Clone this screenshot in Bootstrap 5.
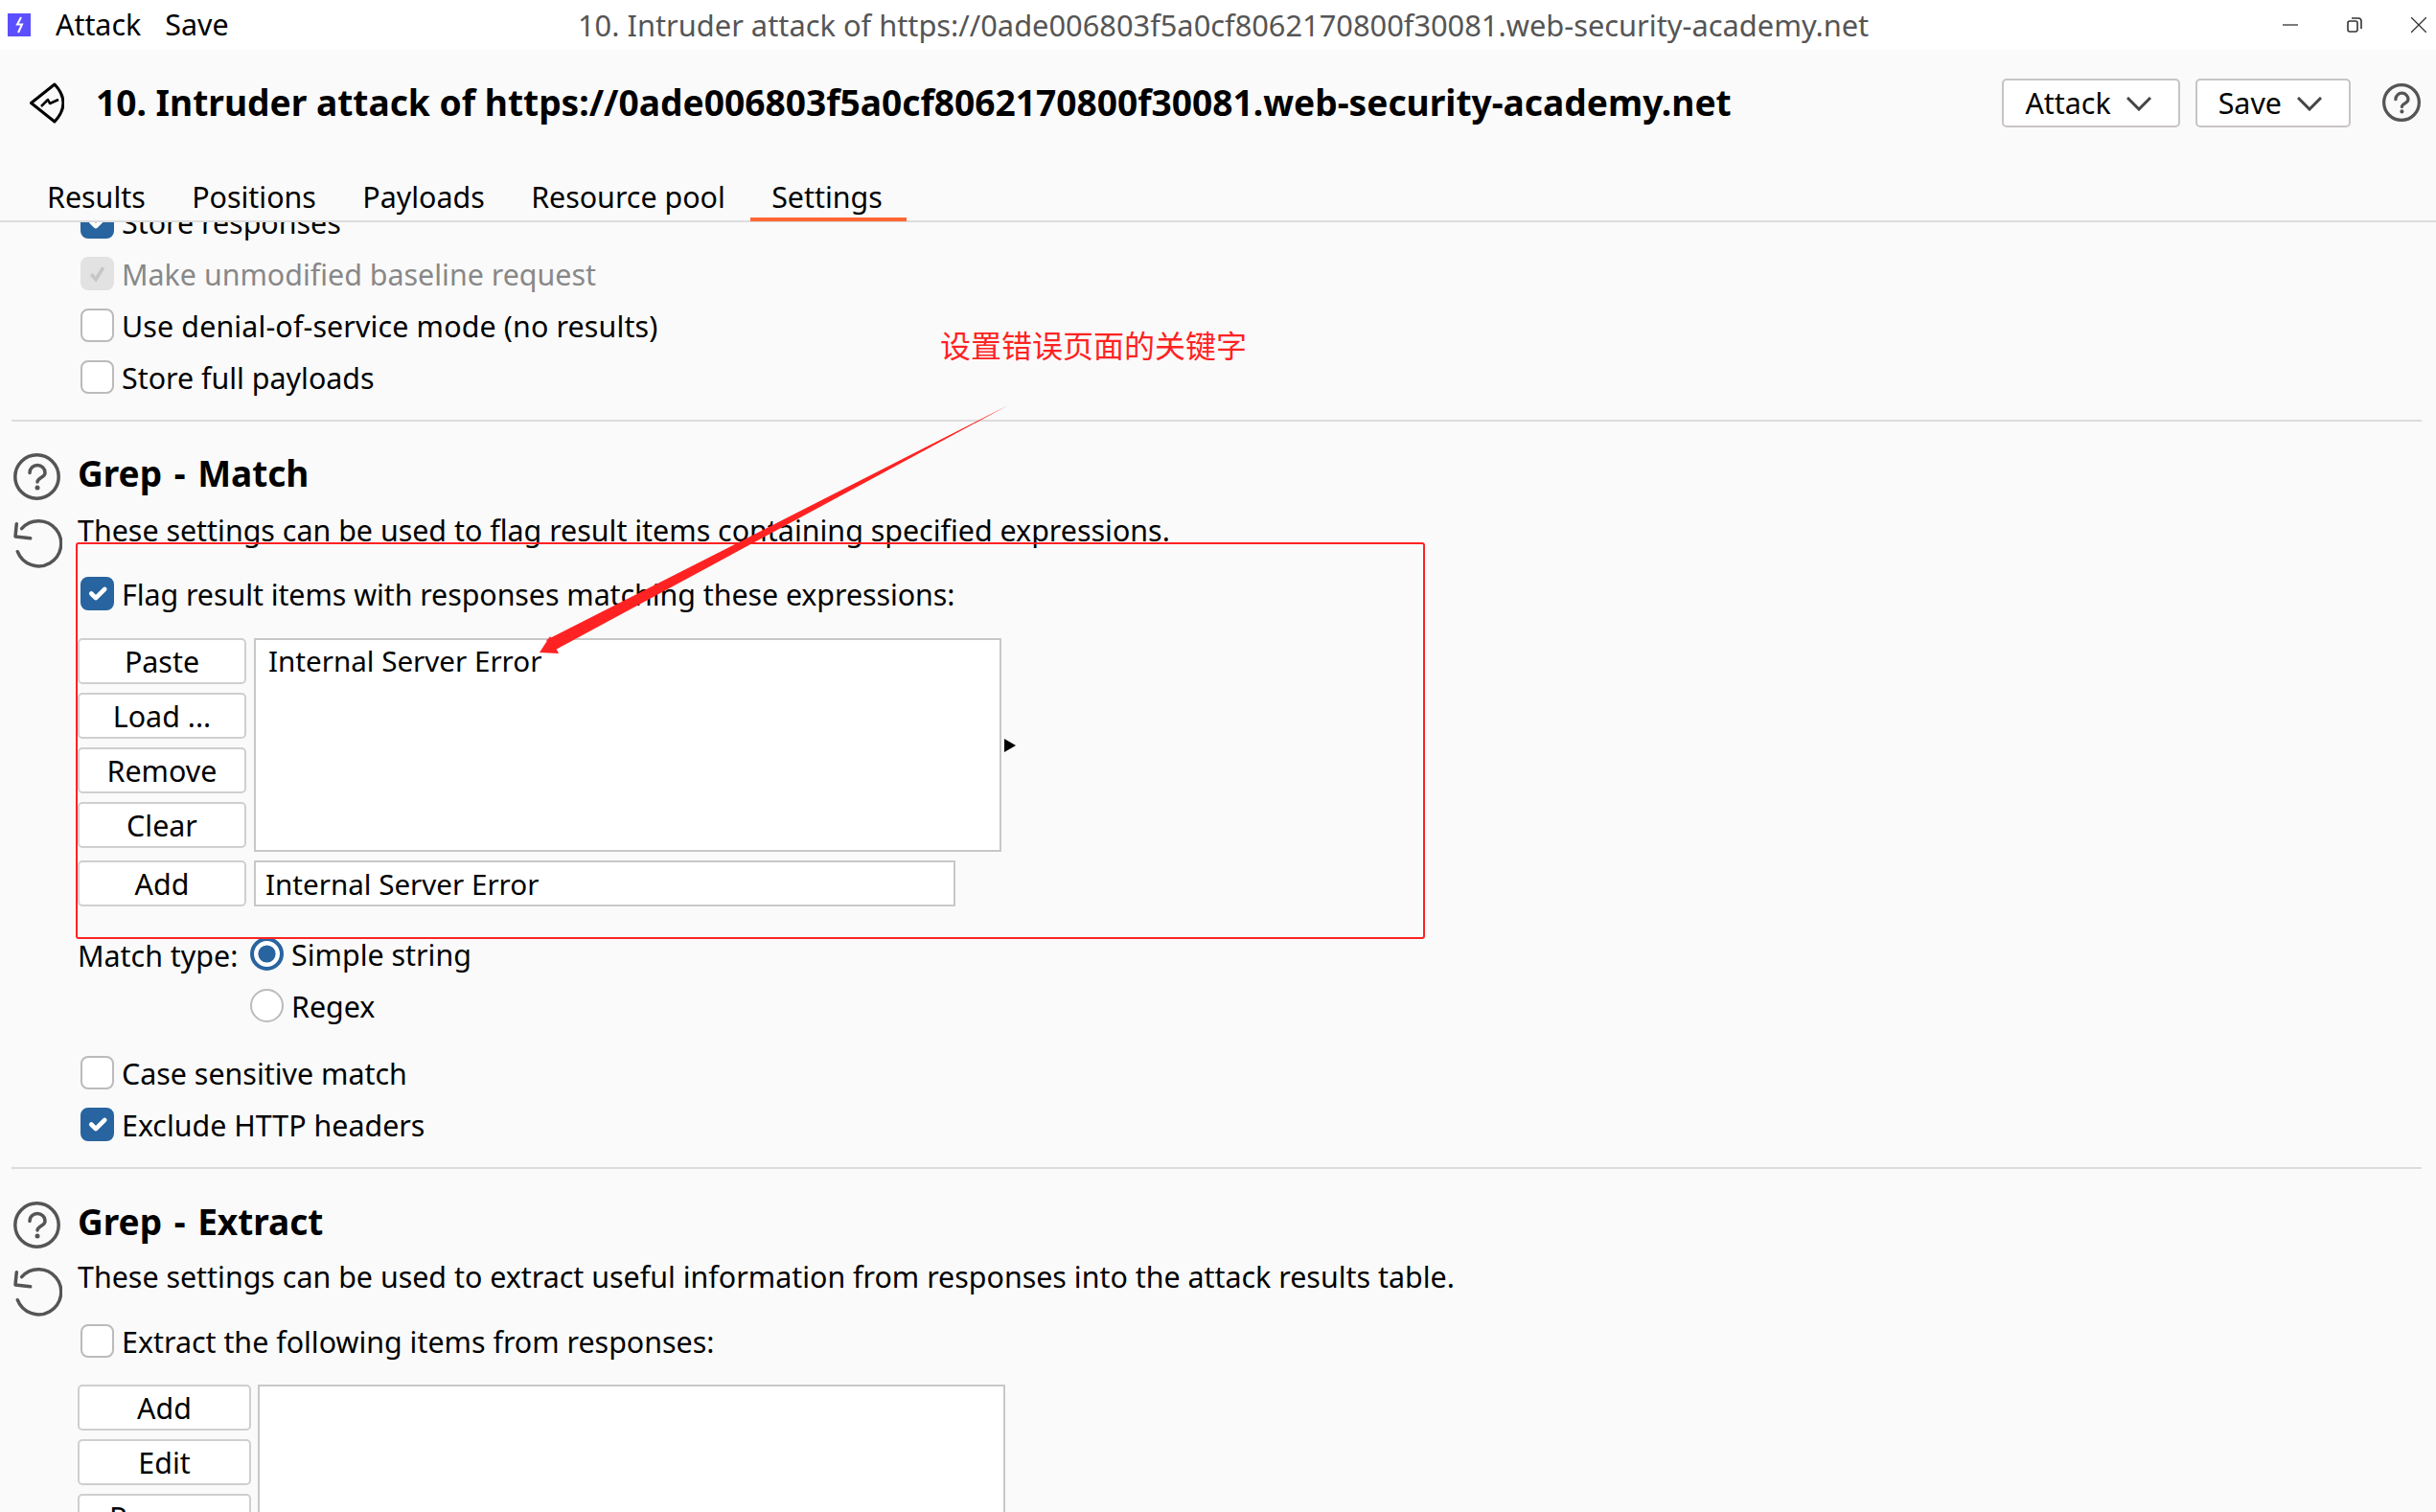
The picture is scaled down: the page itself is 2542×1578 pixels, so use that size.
<!DOCTYPE html>
<html lang="en">
<head>
    <meta charset="UTF-8">
    <meta name="viewport" content="width=device-width, initial-scale=1.0">
    <link href="https://cdn.jsdelivr.net/npm/bootstrap@5.3.0/dist/css/bootstrap.min.css" rel="stylesheet">
    <title>Intruder attack</title>
    <style>
        html, body { height: 100%; }
        body { font-family: "Noto Sans", "Noto Sans CJK SC", sans-serif; font-size: 30.4px; line-height: 40px; color: #000; background: #fafafa; overflow: hidden; position: relative; }
        .title-bar { height: 52px; background: #fff; padding: 0 10px 0 8px; }
        .app-logo { width: 24px; height: 24px; margin-right: 26px; }
        .menu-group { width: 545px; }
        .menu-word { margin-right: 25px; }
        .win-title { color: #555; font-size: 30.8px; }
        .win-btns { gap: 51px; }
        .win-btns svg { width: 16px; height: 16px; }
        .head-bar { height: 180px; border-bottom: 2px solid #dcdcdc; }
        .head-top { height: 110px; padding: 0 16px 0 31px; }
        .back-icon { width: 36px; height: 43px; margin-right: 33px; }
        .attack-title { font-size: 37.15px; font-weight: 700; line-height: 48px; }
        .head-actions { gap: 16px; }
        .drop-btn { height: 51px; border: 2px solid #c8c4c4; border-radius: 5px; background: #fff; padding: 2px 28px 0 22px; font-size: 30.4px; line-height: 1; gap: 16px; color: #000; }
        .help-top { margin-left: 17px; }
        .tab-row { margin-top: auto; padding: 3px 0 0 49px; gap: 48.4px; height: 52px; }
        .tab-word { position: relative; }
        .tab-word.on::after { content: ""; position: absolute; left: -22px; right: -25px; bottom: -5px; height: 4px; background: #f63; }
        .scroll-pane { height: 1346px; overflow: hidden; }
        .pane-inner { margin-top: -28px; padding-left: 84px; }
        .opt-row { height: 54px; gap: 8px; }
        .opt-row span { padding-top: 3px; }
        .flag-row span { letter-spacing: -0.06px; }
        .wide-word { letter-spacing: 0.13px; }
        .opt-check.form-check-input { width: 35px; height: 35px; margin: 0; border: 2px solid #bbb; border-radius: 8px; background-color: #fff; flex: none; }
        .opt-check.form-check-input:checked { background-color: #2864a0; border-color: #2864a0; }
        .opt-check.form-check-input:disabled { opacity: 1; background-color: #e2e2e2; border-color: #e2e2e2; background-image: url("data:image/svg+xml,%3csvg xmlns='http://www.w3.org/2000/svg' viewBox='0 0 20 20'%3e%3cpath fill='none' stroke='%23c6c6c6' stroke-width='2.4' d='M6 10.5l3 3.5 5-8'/%3e%3c/svg%3e"); }
        .opt-radio.form-check-input { width: 35px; height: 35px; margin: 0; border: 2px solid #bbb; background-color: #fff; flex: none; }
        .opt-radio.form-check-input:checked { background-color: #fff; border: 4px solid #2864a0; background-image: url("data:image/svg+xml,%3csvg xmlns='http://www.w3.org/2000/svg' viewBox='-4 -4 8 8'%3e%3ccircle r='2.7' fill='%232864a0'/%3e%3c/svg%3e"); }
        .muted-word { color: #888; }
        .rule-line { height: 2px; background: #dcdcdc; margin: 18px 15px 0 -72px; }
        .section-head { position: relative; }
        .side-icons { position: absolute; left: -70px; top: 0; }
        .side-help { position: absolute; left: 0; top: 3px; }
        .side-undo { position: absolute; left: -1px; top: 72px; }
        .section-name { font-size: 37px; font-weight: 700; line-height: 48px; margin-left: -3px; word-spacing: 3px; }
        .section-desc { margin-left: -3px; }
        .gap-first { margin-top: 30px; }
        .desc-first { margin-top: 16px; }
        .gap-second { margin-top: 31px; }
        .desc-second { margin-top: 14px; }
        .flag-row { margin-top: 18px; }
        .extract-row { margin-top: 19px; }
        .list-block { gap: 8px; margin-left: -3px; margin-top: 20px; }
        .add-block { margin-top: 9px; }
        .stack-btns { gap: 9px; }
        .plain-btn { width: 176px; height: 48px; border: 2px solid #cfcfcf; border-radius: 5px; background: #fff; font-size: 30.4px; line-height: 1; padding: 3px 0 0; color: #000; }
        .list-area { background: #fff; border: 2px solid #c8c8c8; width: 780px; height: 223px; padding: 2px 7px 0 13px; font-size: 29.6px; }
        .text-entry { background: #fff; border: 2px solid #c8c8c8; width: 732px; height: 48px; padding: 2px 9px 0 10px; line-height: 42px; font-size: 29.6px; }
        .side-arrow { width: 0; height: 0; border-left: 12px solid #000; border-top: 7px solid transparent; border-bottom: 7px solid transparent; margin-left: -5px; align-self: center; }
        .match-block { margin-top: 22px; margin-left: -3px; }
        .match-label { width: 180px; line-height: 54px; padding-top: 3px; }
        .case-row { margin-top: 16px; }
        .extract-block { gap: 7px; margin-left: -3px; margin-top: 19px; }
        .wide-btn { width: 181px; }
        .wide-area { width: 780px; height: 400px; }
        .note-overlay { position: absolute; left: 0; top: 0; width: 2542px; height: 1578px; pointer-events: none; }
        .note-text { position: absolute; left: 981px; top: 338px; color: #f22; font-size: 32px; line-height: 42px; font-family: "Noto Sans CJK SC", sans-serif; }
    </style>
</head>
<body>
    <div class="title-bar d-flex align-items-center">
        <svg class="app-logo" viewBox="0 0 24 24"><rect width="24" height="24" fill="#5b4fff"/><path d="M14 4L10 11.5h5L11 20" fill="none" stroke="#fff" stroke-width="2"/></svg>
        <div class="menu-group"><span class="menu-word">Attack</span><span class="menu-word">Save</span></div>
        <span class="win-title">10. Intruder attack of https://0ade006803f5a0cf8062170800f30081.web-security-academy.net</span>
        <div class="win-btns d-flex align-items-center ms-auto">
            <svg viewBox="0 0 16 16" fill="none" stroke="#333" stroke-width="1.3"><path d="M0 8h16"/></svg>
            <svg viewBox="0 0 16 16" fill="none" stroke="#333" stroke-width="1.6"><rect x="1" y="4" width="10" height="11" rx="2"/><path d="M5 1h7a3 3 0 0 1 3 3v8"/></svg>
            <svg viewBox="0 0 16 16" fill="none" stroke="#333" stroke-width="1.3"><path d="M0 0l16 16M16 0L0 16"/></svg>
        </div>
    </div>
    <div class="head-bar d-flex flex-column">
        <div class="head-top d-flex align-items-center">
            <svg class="back-icon" viewBox="0 0 36 43" fill="none" stroke="#000" stroke-width="3" stroke-linejoin="round"><path d="M1.500 21.500L26 2q18 19.500 0 39z"/><path d="M12 25l7-7 2 4 9-4" stroke-width="2.500"/></svg>
            <div class="attack-title">10. Intruder attack of https://0ade006803f5a0cf8062170800f30081.web-security-academy.net</div>
            <div class="head-actions d-flex align-items-center ms-auto">
                <button class="drop-btn d-flex align-items-center">Attack <svg width="26" height="15" viewBox="0 0 26 15" fill="none" stroke="#444" stroke-width="3"><path d="M1 1l12 12L25 1"/></svg></button>
                <button class="drop-btn d-flex align-items-center">Save <svg width="26" height="15" viewBox="0 0 26 15" fill="none" stroke="#444" stroke-width="3"><path d="M1 1l12 12L25 1"/></svg></button>
                <svg class="help-top" width="40" height="40" viewBox="0 0 49 49" fill="none" stroke="#555" stroke-width="4" stroke-linecap="round"><circle cx="24.500" cy="24.500" r="22.500"/><path d="M17 20.500a8 8 0 0 1 16 0c0 5-8 5-8 9.500"/><circle cx="25" cy="36" r="2.500" fill="#555" stroke="none"/></svg>
            </div>
        </div>
        <div class="tab-row d-flex align-items-center">
            <span class="tab-word">Results</span><span class="tab-word">Positions</span><span class="tab-word">Payloads</span><span class="tab-word">Resource pool</span><span class="tab-word on">Settings</span>
        </div>
    </div>
    <div class="scroll-pane">
        <div class="pane-inner">
            <div class="opt-row d-flex align-items-center"><input class="form-check-input opt-check" type="checkbox" checked><span>Store responses</span></div>
            <div class="opt-row d-flex align-items-center"><input class="form-check-input opt-check" type="checkbox" checked disabled><span class="muted-word">Make unmodified baseline request</span></div>
            <div class="opt-row d-flex align-items-center"><input class="form-check-input opt-check" type="checkbox"><span class="wide-word">Use denial-of-service mode (no results)</span></div>
            <div class="opt-row d-flex align-items-center"><input class="form-check-input opt-check" type="checkbox"><span>Store full payloads</span></div>
            <div class="rule-line"></div>
            <div class="section-head gap-first">
                <div class="side-icons">
                    <svg class="side-help" width="49" height="49" viewBox="0 0 49 49" fill="none" stroke="#555" stroke-width="3.500" stroke-linecap="round"><circle cx="24.500" cy="24.500" r="22.700"/><path d="M17 20.500a8 8 0 0 1 16 0c0 5-8 5-8 9.500"/><circle cx="25" cy="36" r="2.500" fill="#555" stroke="none"/></svg>
                    <svg class="side-undo" width="52" height="52" viewBox="0 0 52 52" fill="none" stroke="#555" stroke-width="3.500" stroke-linecap="round" stroke-linejoin="round"><path d="M9.700 9.700A23.500 23.500 0 1 1 5.300 33.700"/><path d="M4.300 4.700L3 18l15.700 1.700"/></svg>
                </div>
                <div class="section-name">Grep - Match</div>
                <div class="section-desc desc-first">These settings can be used to flag result items containing specified expressions.</div>
            </div>
            <div class="opt-row flag-row d-flex align-items-center"><input class="form-check-input opt-check" type="checkbox" checked><span>Flag result items with responses matching these expressions:</span></div>
            <div class="list-block d-flex">
                <div class="stack-btns d-flex flex-column">
                    <button class="plain-btn">Paste</button><button class="plain-btn">Load ...</button><button class="plain-btn">Remove</button><button class="plain-btn">Clear</button>
                </div>
                <div class="list-area">Internal Server Error</div>
                <div class="side-arrow"></div>
            </div>
            <div class="list-block add-block d-flex">
                <button class="plain-btn">Add</button>
                <div class="text-entry">Internal Server Error</div>
            </div>
            <div class="match-block d-flex">
                <span class="match-label">Match type:</span>
                <div class="d-flex flex-column">
                    <div class="opt-row d-flex align-items-center"><input class="form-check-input opt-radio" type="radio" name="mt" checked><span>Simple string</span></div>
                    <div class="opt-row d-flex align-items-center"><input class="form-check-input opt-radio" type="radio" name="mt"><span>Regex</span></div>
                </div>
            </div>
            <div class="opt-row case-row d-flex align-items-center"><input class="form-check-input opt-check" type="checkbox"><span>Case sensitive match</span></div>
            <div class="opt-row d-flex align-items-center"><input class="form-check-input opt-check" type="checkbox" checked><span>Exclude HTTP headers</span></div>
            <div class="rule-line"></div>
            <div class="section-head gap-second">
                <div class="side-icons">
                    <svg class="side-help" width="49" height="49" viewBox="0 0 49 49" fill="none" stroke="#555" stroke-width="3.500" stroke-linecap="round"><circle cx="24.500" cy="24.500" r="22.700"/><path d="M17 20.500a8 8 0 0 1 16 0c0 5-8 5-8 9.500"/><circle cx="25" cy="36" r="2.500" fill="#555" stroke="none"/></svg>
                    <svg class="side-undo" width="52" height="52" viewBox="0 0 52 52" fill="none" stroke="#555" stroke-width="3.500" stroke-linecap="round" stroke-linejoin="round"><path d="M9.700 9.700A23.500 23.500 0 1 1 5.300 33.700"/><path d="M4.300 4.700L3 18l15.700 1.700"/></svg>
                </div>
                <div class="section-name">Grep - Extract</div>
                <div class="section-desc desc-second">These settings can be used to extract useful information from responses into the attack results table.</div>
            </div>
            <div class="opt-row extract-row d-flex align-items-center"><input class="form-check-input opt-check" type="checkbox"><span>Extract the following items from responses:</span></div>
            <div class="extract-block d-flex">
                <div class="stack-btns d-flex flex-column">
                    <button class="plain-btn wide-btn">Add</button><button class="plain-btn wide-btn">Edit</button><button class="plain-btn wide-btn">Remove</button>
                </div>
                <div class="list-area wide-area"></div>
            </div>
        </div>
    </div>
    <svg class="note-overlay" viewBox="0 0 2542 1578">
        <rect x="80" y="567" width="1406" height="412" fill="none" stroke="#f22" stroke-width="2" rx="2"/>
        <polygon points="1052,423 570,668 578,679" fill="#f22"/>
        <polygon points="563,681 574,664 583,682" fill="#f22"/>
    </svg>
    <div class="note-text">设置错误页面的关键字</div>
    <script src="https://cdn.jsdelivr.net/npm/bootstrap@5.3.0/dist/js/bootstrap.bundle.min.js"></script>
</body>
</html>
